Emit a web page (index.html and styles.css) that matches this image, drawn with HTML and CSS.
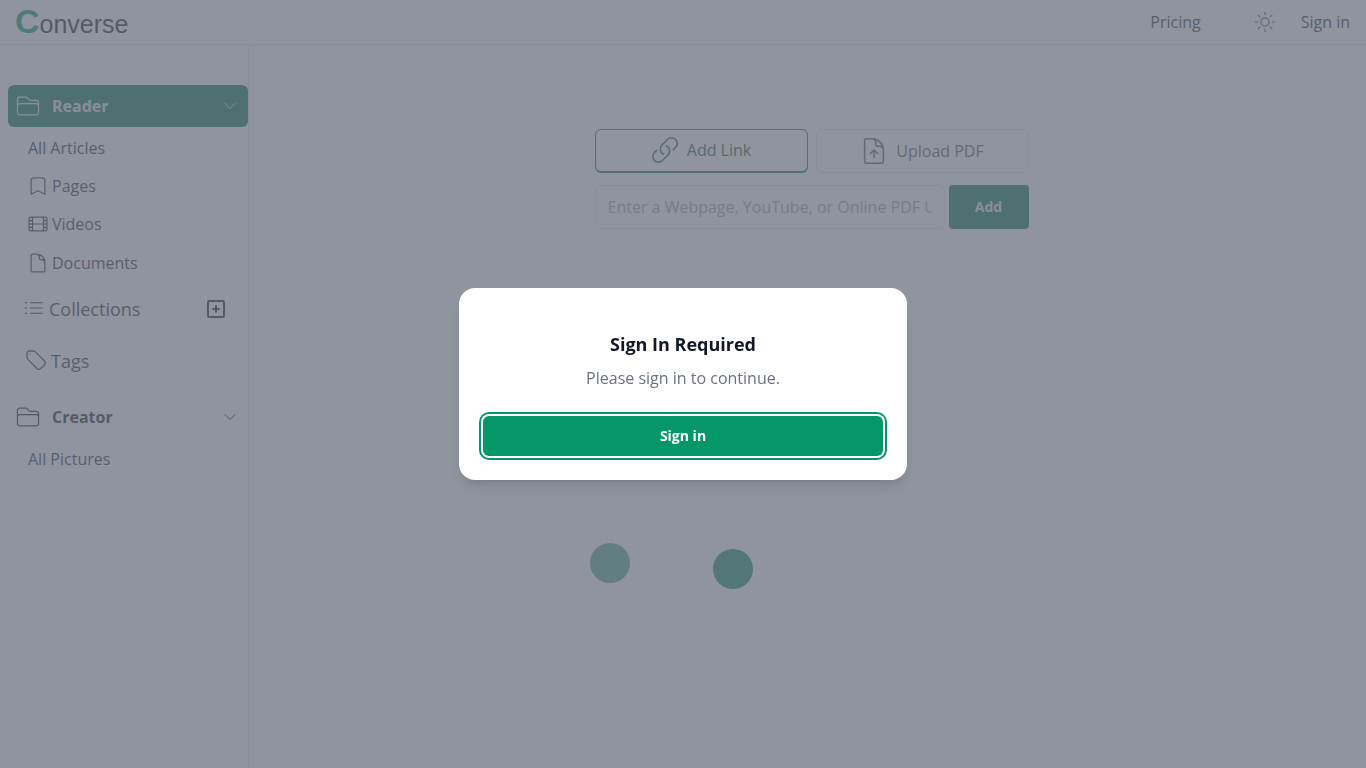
FILE: index.html
```html
<!DOCTYPE html>
<html>
    <head>
        <title>Converse</title>
        <meta charset="UTF-8">
        <meta name="viewport" content="width=device-width, initial-scale=1.0">
        <link rel="stylesheet" href="styles.css">
    </head>
    <body>
        <header class="topbar">
            <a class="logo"><span class="logo-c">C</span>onverse</a>
            <nav class="top-links">
                <a class="top-link">Pricing</a>
                <svg class="sun" viewBox="0 0 24 24"><path d="M12 3v2.25m6.364.386l-1.591 1.591M21 12h-2.25m-.386 6.364l-1.591-1.591M12 18.75V21m-4.773-4.227l-1.591 1.591M5.25 12H3m4.227-4.773L5.636 5.636M15.75 12a3.75 3.75 0 11-7.5 0 3.75 3.75 0 017.5 0z"/></svg>
                <a class="top-link">Sign in</a>
            </nav>
        </header>

        <div class="page">
            <aside class="sidebar">
                <div class="group group-active">
                    <svg class="icon-folder" viewBox="0 0 24 24"><path d="M2.25 12.75V12A2.25 2.25 0 014.5 9.75h15A2.25 2.25 0 0121.75 12v.75m-8.69-6.44l-2.12-2.12a1.5 1.5 0 00-1.061-.44H4.5A2.25 2.25 0 002.25 6v12a2.25 2.25 0 002.25 2.25h15A2.25 2.25 0 0021.75 18V9a2.25 2.25 0 00-2.25-2.25h-5.379a1.5 1.5 0 01-1.06-.44z"/></svg>
                    <span class="group-name">Reader</span>
                    <svg class="chevron" viewBox="0 0 24 24"><path d="M19.5 8.25l-7.5 7.5-7.5-7.5"/></svg>
                </div>
                <a class="item">All Articles</a>
                <a class="item item-sub">
                    <svg class="icon-item" viewBox="0 0 24 24"><path d="M17.593 3.322c1.1.128 1.907 1.077 1.907 2.185V21L12 17.25 4.5 21V5.507c0-1.108.806-2.057 1.907-2.185a48.507 48.507 0 0111.186 0z"/></svg>
                    Pages
                </a>
                <a class="item item-sub">
                    <svg class="icon-item" viewBox="0 0 24 24"><path d="M3.375 19.5h17.25m-17.25 0a1.125 1.125 0 01-1.125-1.125M3.375 19.5h1.5C5.496 19.5 6 18.996 6 18.375m-3.75 0V5.625m0 12.75v-1.5c0-.621.504-1.125 1.125-1.125m18.375 2.625V5.625m0 12.75c0 .621-.504 1.125-1.125 1.125m1.125-1.125v-1.5c0-.621-.504-1.125-1.125-1.125m0 3.75h-1.5A1.125 1.125 0 0118 18.375M20.625 4.5H3.375m17.25 0c.621 0 1.125.504 1.125 1.125M20.625 4.5h-1.5C18.504 4.5 18 5.004 18 5.625m3.75 0v1.5c0 .621-.504 1.125-1.125 1.125M3.375 4.5c-.621 0-1.125.504-1.125 1.125M3.375 4.5h1.5C5.496 4.5 6 5.004 6 5.625m-3.75 0v1.5c0 .621.504 1.125 1.125 1.125m0 0h1.5m-1.5 0c-.621 0-1.125.504-1.125 1.125v1.5c0 .621.504 1.125 1.125 1.125m1.5-3.75C5.496 8.25 6 7.746 6 7.125v-1.5M4.875 8.25C5.496 8.25 6 8.754 6 9.375v1.5m0-5.25v5.25m0-5.25C6 5.004 6.504 4.5 7.125 4.5h9.75c.621 0 1.125.504 1.125 1.125m1.125 2.625h1.5m-1.5 0A1.125 1.125 0 0118 7.125v-1.5m1.125 2.625c-.621 0-1.125.504-1.125 1.125v1.5m2.625-2.625c.621 0 1.125.504 1.125 1.125v1.5c0 .621-.504 1.125-1.125 1.125M18 5.625v5.25M7.125 12h9.75m-9.75 0A1.125 1.125 0 016 10.875M7.125 12C6.504 12 6 12.504 6 13.125m0-2.25C6 11.496 5.496 12 4.875 12M18 10.875c0 .621-.504 1.125-1.125 1.125M18 10.875c0 .621.504 1.125 1.125 1.125m-2.25 0c.621 0 1.125.504 1.125 1.125m-12 5.25v-5.25m0 5.25c0 .621.504 1.125 1.125 1.125h9.75c.621 0 1.125-.504 1.125-1.125m-12 0v-1.5c0-.621-.504-1.125-1.125-1.125M18 18.375v-5.25m0 5.25v-1.5c0-.621.504-1.125 1.125-1.125M18 13.125v1.5c0 .621.504 1.125 1.125 1.125M18 13.125c0-.621.504-1.125 1.125-1.125M6 13.125v1.5c0 .621-.504 1.125-1.125 1.125M6 13.125C6 12.504 5.496 12 4.875 12m-1.5 0h1.5m-1.5 0c-.621 0-1.125.504-1.125 1.125v1.5c0 .621.504 1.125 1.125 1.125M19.125 12h1.5m0 0c.621 0 1.125.504 1.125 1.125v1.5c0 .621-.504 1.125-1.125 1.125m-17.25 0h1.5m14.25 0h1.5"/></svg>
                    Videos
                </a>
                <a class="item item-sub item-docs">
                    <svg class="icon-item" viewBox="0 0 24 24"><path d="M19.5 14.25v-2.625a3.375 3.375 0 00-3.375-3.375h-1.5A1.125 1.125 0 0113.5 7.125v-1.5a3.375 3.375 0 00-3.375-3.375H8.25m2.25 0H5.625c-.621 0-1.125.504-1.125 1.125v17.25c0 .621.504 1.125 1.125 1.125h12.75c.621 0 1.125-.504 1.125-1.125V11.25a9 9 0 00-9-9z"/></svg>
                    Documents
                </a>
                <div class="big-item big-collections">
                    <svg class="icon-list" viewBox="0 0 24 24"><path d="M8.25 6.75h12M8.25 12h12m-12 5.25h12M3.75 6.75h.007v.008H3.75V6.75zm.375 0a.375.375 0 11-.75 0 .375.375 0 01.75 0zM3.75 12h.007v.008H3.75V12zm.375 0a.375.375 0 11-.75 0 .375.375 0 01.75 0zm-.375 5.25h.007v.008H3.75v-.008zm.375 0a.375.375 0 11-.75 0 .375.375 0 01.75 0z"/></svg>
                    <span class="big-name">Collections</span>
                    <svg class="add-box" viewBox="0 0 18 18"><rect x="1" y="1" width="16" height="16" rx="1.2"/><path d="M9 6v6M6 9h6"/></svg>
                </div>
                <div class="big-item big-tags">
                    <svg class="icon-tag" viewBox="0 0 24 24"><path d="M9.568 3H5.25A2.25 2.25 0 003 5.25v4.318c0 .597.237 1.17.659 1.591l9.581 9.581c.699.699 1.78.872 2.607.33a18.095 18.095 0 005.223-5.223c.542-.827.369-1.908-.33-2.607L11.16 3.66A2.25 2.25 0 009.568 3z"/><path d="M6 6h.008v.008H6V6z"/></svg>
                    <span class="big-name">Tags</span>
                </div>
                <div class="group group-creator">
                    <svg class="icon-folder" viewBox="0 0 24 24"><path d="M2.25 12.75V12A2.25 2.25 0 014.5 9.75h15A2.25 2.25 0 0121.75 12v.75m-8.69-6.44l-2.12-2.12a1.5 1.5 0 00-1.061-.44H4.5A2.25 2.25 0 002.25 6v12a2.25 2.25 0 002.25 2.25h15A2.25 2.25 0 0021.75 18V9a2.25 2.25 0 00-2.25-2.25h-5.379a1.5 1.5 0 01-1.06-.44z"/></svg>
                    <span class="group-name">Creator</span>
                    <svg class="chevron" viewBox="0 0 24 24"><path d="M19.5 8.25l-7.5 7.5-7.5-7.5"/></svg>
                </div>
                <a class="item">All Pictures</a>
            </aside>

            <main class="main">
                <div class="add-panel">
                    <div class="tabs">
                        <button class="tab tab-on">
                            <svg class="tab-icon" viewBox="0 0 24 24"><path d="M13.19 8.688a4.5 4.5 0 011.242 7.244l-4.5 4.5a4.5 4.5 0 01-6.364-6.364l1.757-1.757m13.35-.622l1.757-1.757a4.5 4.5 0 00-6.364-6.364l-4.5 4.5a4.5 4.5 0 001.242 7.244"/></svg>
                            Add Link
                        </button>
                        <button class="tab">
                            <svg class="tab-icon" viewBox="0 0 24 24"><path d="M19.5 14.25v-2.625a3.375 3.375 0 00-3.375-3.375h-1.5A1.125 1.125 0 0113.5 7.125v-1.5a3.375 3.375 0 00-3.375-3.375H8.25m6.75 12l-3-3m0 0l-3 3m3-3v6m-1.5-15H5.625c-.621 0-1.125.504-1.125 1.125v17.25c0 .621.504 1.125 1.125 1.125h12.75c.621 0 1.125-.504 1.125-1.125V11.25a9 9 0 00-9-9z"/></svg>
                            Upload PDF
                        </button>
                    </div>
                    <div class="add-row">
                        <input class="url-input" type="text" placeholder="Enter a Webpage, YouTube, or Online PDF URL">
                        <button class="add-btn">Add</button>
                    </div>
                </div>
                <div class="loader">
                    <span class="dot dot-one"></span>
                    <span class="dot dot-two"></span>
                </div>
            </main>
        </div>

        <!-- sign in popup -->
        <div class="overlay">
            <div class="dialog">
                <h3 class="dialog-title">Sign In Required</h3>
                <p class="dialog-text">Please sign in to continue.</p>
                <button class="signin-btn">Sign in</button>
            </div>
        </div>
    </body>
</html>
```

FILE: styles.css
```css
* {box-sizing: border-box;}

body {
    margin: 0;
    height: 768px;
    overflow: hidden;
    background-color: white;
    color: #1f2937;
    font-family: "Open Sans", sans-serif;
    font-size: 16px;
}

svg {
    fill: none;
    stroke: currentColor;
    stroke-width: 1.5;
    stroke-linecap: round;
    stroke-linejoin: round;
    flex-shrink: 0;
}

/* Top bar */
.topbar {
    display: flex;
    justify-content: space-between;
    align-items: center;
    height: 45px;
    padding: 0 16px 1px 15px;
    border-bottom: 1px solid #e5e7eb;
}

.logo {
    padding-top: 2px;
    font-family: "Liberation Sans", Arial, sans-serif;
    font-size: 25px;
    line-height: 42px;
    color: #111827;
}

.logo-c {
    font-size: 34px;
    font-weight: bold;
    color: #059669;
}

.top-links {
    display: flex;
    align-items: center;
}

.top-link {
    color: #1f2937;
}

.sun {
    width: 26px;
    height: 26px;
    margin: 0 23px 0 51px;
    color: #4b5563;
    stroke-width: 1.1;
}

/* Sidebar */
.page {
    display: flex;
    height: 723px;
}

.sidebar {
    width: 249px;
    flex-shrink: 0;
    padding: 40px 0 0 8px;
    border-right: 1px solid #e5e7eb;
}

.group {
    display: flex;
    align-items: center;
    height: 42px;
    padding: 0 10px 0 7px;
    border-radius: 6px;
    color: #111827;
}

.group-active {
    background-color: #037050;
    color: #e5e7eb;
}

.group-creator {
    margin-top: 14px;
}

.group-name {
    flex: 1;
    margin-left: 11px;
    font-weight: 700;
}

.icon-folder {
    width: 26px;
    height: 26px;
    stroke-width: 1.1;
}

.chevron {
    width: 16px;
    height: 16px;
}

.item {
    display: flex;
    align-items: center;
    height: 38px;
    margin-top: 2px;
    margin-bottom: -2px;
    padding-left: 20px;
    color: #1f2937;
}

.item-sub {
    padding-left: 19px;
}

.item-docs {
    margin-top: 3px;
}

.icon-item {
    width: 22px;
    height: 22px;
    margin-right: 3px;
    stroke-width: 1.3;
}

.big-item {
    display: flex;
    align-items: center;
    height: 42px;
    font-size: 18px;
}

.big-collections {
    margin-top: 8px;
    padding: 0 23px 0 14px;
}

.big-collections .big-name {
    flex: 1;
}

.icon-list {
    width: 24px;
    height: 24px;
    margin: -2px 3px 0 0;
    stroke-width: 1.2;
}

.big-tags {
    margin-top: 10px;
    padding-left: 16px;
}

.icon-tag {
    width: 24px;
    height: 24px;
    margin: -2px 3px 0 0;
    stroke-width: 1.3;
}

.add-box {
    width: 18px;
    height: 18px;
    stroke-width: 2;
    color: #111827;
}

/* Add link panel */
.main {
    flex: 1;
    padding: 84px 0 0 346px;
}

.add-panel {
    width: 434px;
}

.tabs {
    display: flex;
    align-items: flex-start;
    gap: 8px;
}

.tab {
    display: flex;
    justify-content: center;
    align-items: center;
    gap: 7px;
    flex: 1;
    height: 44px;
    padding: 0 2px 0 0;
    border: 1px solid #e5e7eb;
    border-radius: 6px;
    background-color: white;
    color: #4b5563;
    font-family: inherit;
    font-size: 16px;
}

.tab-on {
    height: 43px;
    padding-bottom: 1px;
    border-color: #047857;
    box-shadow: 0 1px 0 #047857;
    color: #065f46;
}

.tab-icon {
    width: 30px;
    height: 30px;
    stroke-width: 1.2;
}

.add-row {
    display: flex;
    gap: 4px;
    margin-top: 12px;
}

.url-input {
    width: 350px;
    height: 44px;
    padding: 0 12px 0 11.5px;
    border: 1px solid #e5e7eb;
    border-radius: 6px;
    background-color: white;
    font-family: inherit;
    font-size: 16px;
}

.url-input::placeholder {
    color: #9ca3af;
    opacity: 1;
}

.add-btn {
    width: 80px;
    height: 44px;
    padding: 0 1px 2px 0;
    border: none;
    border-radius: 4px;
    background-color: #037050;
    color: #e5e7eb;
    font-family: inherit;
    font-size: 14px;
    font-weight: 700;
}

/* Spinner dots */
.loader {
    display: flex;
    gap: 83px;
    margin: 314px 0 0 -5px;
}

.dot {
    width: 40px;
    height: 40px;
    border-radius: 50%;
    background-color: #04805d;
}

.dot-one {
    opacity: 0.7;
}

.dot-two {
    margin-top: 6px;
    opacity: 0.95;
}

/* Sign in popup */
.overlay {
    position: fixed;
    top: 0;
    left: 0;
    right: 0;
    bottom: 0;
    display: flex;
    justify-content: center;
    align-items: center;
    background-color: rgba(106, 112, 125, 0.75);
}

.dialog {
    width: 448px;
    height: 192px;
    padding: 40px 24px 24px 24px;
    border-radius: 16px;
    background-color: white;
    box-shadow: 0 10px 15px -3px rgba(0, 0, 0, 0.1), 0 4px 6px -4px rgba(0, 0, 0, 0.1);
    text-align: center;
}

.dialog-title {
    margin: 0;
    font-size: 18px;
    font-weight: 700;
    line-height: 32px;
    color: #111827;
}

.dialog-text {
    margin: 6px 0 0 0;
    font-size: 16px;
    line-height: 24px;
    color: #6b7280;
}

.signin-btn {
    display: block;
    width: 400px;
    height: 40px;
    margin-top: 26px;
    padding: 0 0 2px 0;
    border: none;
    border-radius: 6px;
    background-color: #059669;
    box-shadow: 0 0 0 2px white, 0 0 0 4px #059669;
    color: white;
    font-family: inherit;
    font-size: 14px;
    font-weight: 700;
}
```
